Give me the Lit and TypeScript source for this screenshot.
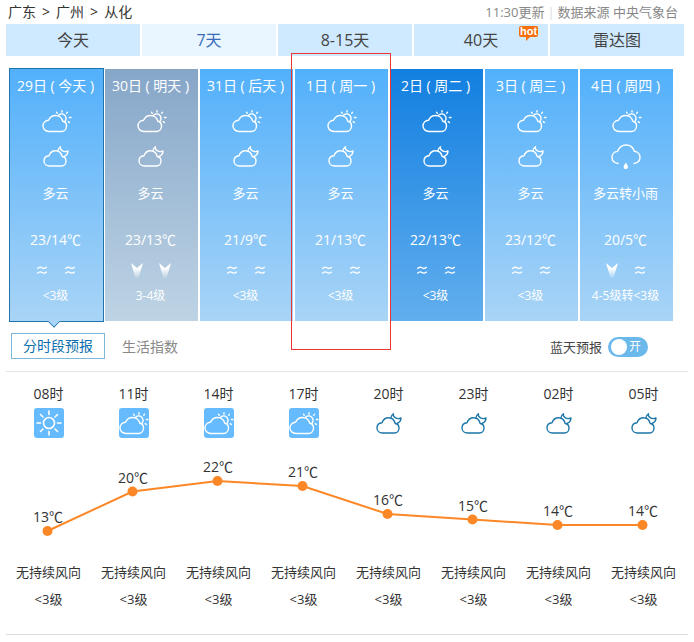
import { LitElement, html, svg, css } from "lit";
import { customElement } from "lit/decorators.js";

const days = [
  { date: "29日 ( 今天 )", weather: "多云", temp: "23/14℃", wind: ["w", "w"], level: "<3级", cls: "today", night: "moon" },
  { date: "30日 ( 明天 )", weather: "多云", temp: "23/13℃", wind: ["a", "a"], level: "3-4级", cls: "grey", night: "moon" },
  { date: "31日 ( 后天 )", weather: "多云", temp: "21/9℃", wind: ["w", "w"], level: "<3级", cls: "", night: "moon" },
  { date: "1日 ( 周一 )", weather: "多云", temp: "21/13℃", wind: ["w", "w"], level: "<3级", cls: "", night: "moon" },
  { date: "2日 ( 周二 )", weather: "多云", temp: "22/13℃", wind: ["w", "w"], level: "<3级", cls: "deep", night: "moon" },
  { date: "3日 ( 周三 )", weather: "多云", temp: "23/12℃", wind: ["w", "w"], level: "<3级", cls: "", night: "moon" },
  { date: "4日 ( 周四 )", weather: "多云转小雨", temp: "20/5℃", wind: ["a", "w"], level: "4-5级转<3级", cls: "", night: "rain" },
];

const hours = [
  { t: "08时", icon: "sun", temp: 13, y: 75 },
  { t: "11时", icon: "cloud", temp: 20, y: 35.5 },
  { t: "14时", icon: "cloud", temp: 22, y: 25 },
  { t: "17时", icon: "cloud", temp: 21, y: 30 },
  { t: "20时", icon: "moon", temp: 16, y: 58 },
  { t: "23时", icon: "moon", temp: 15, y: 63.5 },
  { t: "02时", icon: "moon", temp: 14, y: 69 },
  { t: "05时", icon: "moon", temp: 14, y: 69 },
];

const cloudSun = html`<svg width="30" height="23" viewBox="0 0 30 23" fill="none" stroke="currentColor" stroke-width="1.4" stroke-linecap="round">
  <path d="M7 21.5C3.5 21.5 1 19 1 16C1 12.8 3.5 10.5 6.5 10.3C8 7 11 5.5 13.5 5.5C17 5.5 20 8 20.8 11.2C23 11.5 24.5 13.5 24.5 16C24.5 19 22.5 21.5 19.5 21.5Z"/>
  <path d="M16.3 5.5A4 4 0 1 1 23 11.2"/>
  <path d="M20 .8V2M14.5 2.2L15.3 3.3M25.5 2.2L24.7 3.3M29 7.500H27.4M27.5 12.500L26.2 11.6"/>
</svg>`;

const cloudMoon = html`<svg width="26" height="21" viewBox="0 0 26 21" fill="none" stroke="currentColor" stroke-width="1.4" stroke-linecap="round" stroke-linejoin="round">
  <path d="M6.500 20C3.300 20 1 17.800 1 15C1 12 3.200 10 6 9.800C7.300 6.300 10 4.800 12.500 4.800C15.800 4.800 18.300 7 19.200 10.500C21.500 10.800 23 12.600 23 15C23 17.800 21.200 20 18.500 20Z"/>
  <path d="M14.800 5.200C14.900 3.500 15.800 1.800 17.500 .8C16.500 3.500 20.500 7 25 5C25 7.500 23.500 9.500 21 10.500"/>
</svg>`;

const cloudRain = html`<svg width="30" height="25" viewBox="0 0 30 25" fill="none" stroke="currentColor" stroke-width="1.4" stroke-linecap="round">
  <path d="M7 19.500C3.500 19 1 16.500 1 13.300C1 10 3.400 7.600 6.600 7.300C8 3.600 11.200 1 15 1C19 1 22.300 3.600 23.300 7.300C26.600 7.600 29 10 29 13.300C29 16.500 26.500 19 23 19.500"/>
  <path d="M14.800 19.800C13.800 21.200 13.300 22 13.300 22.800C13.300 23.800 13.900 24.400 14.800 24.400C15.700 24.400 16.300 23.800 16.300 22.800C16.300 22 15.800 21.200 14.800 19.800Z" fill="currentColor"/>
</svg>`;

const sunBox = html`<svg width="30" height="30" viewBox="0 0 30 30" fill="none" stroke="#fff" stroke-width="1.6" stroke-linecap="round">
  <circle cx="15" cy="15" r="5.500"/>
  <path d="M15 3V6.500M15 23.500V27M3 15H6.500M23.500 15H27M6.500 6.500L9 9M21 21L23.500 23.500M23.500 6.500L21 9M9 21L6.500 23.500"/>
</svg>`;

function windIcon(kind: string) {
  if (kind === "a") {
    return html`<svg class="dart" width="12" height="15" viewBox="0 0 12 15">
      <path d="M0 0L6 5L12 0L7.500 15H4.500Z" fill="url(#fade)"/>
    </svg>`;
  }
  return html`<svg width="10" height="9" viewBox="0 0 10 9" fill="none" stroke="#fff" stroke-width="1.400">
    <path d="M.3 2.800C2.200 .8 3.600 .8 5 1.800C6.400 2.800 7.800 2.800 9.700 1"/>
    <path d="M.3 7.500C2.200 5.500 3.600 5.500 5 6.500C6.400 7.500 7.800 7.500 9.700 5.700"/>
  </svg>`;
}

@customElement("app-root")
export class AppRoot extends LitElement {
  static styles = css`
    :host {
      display: block;
      position: relative;
      width: 694px;
      height: 642px;
      overflow: hidden;
      background: #fff;
      font-family: "Open Sans", "Noto Sans CJK SC", sans-serif;
      color: #333;
    }
    .top {
      display: flex;
      justify-content: space-between;
      align-items: center;
      box-sizing: border-box;
      height: 24px;
      padding: 0 16px 2px 8px;
    }
    .crumb { font-size: 14px; word-spacing: 2.4px; color: #333; }
    .update { font-size: 13px; color: #888; }
    .update i { color: #ddd; font-style: normal; margin: 0 3px; }
    .tabs {
      display: flex;
      gap: 2px;
      margin-left: 6px;
    }
    .tab {
      position: relative;
      width: 134px;
      height: 32px;
      line-height: 32px;
      text-align: center;
      font-size: 16px;
      color: #444;
      background: #cfe9ff;
    }
    .tab.on { background: #e9f5ff; color: #3a6cb8; }
    .hot {
      position: absolute;
      left: 105px;
      top: 2px;
      width: 19px;
      height: 11px;
      line-height: 11px;
      font-size: 11px;
      font-weight: 700;
      font-family: "Liberation Sans", sans-serif;
      color: #fff;
      background: #f66f0c;
      border-radius: 2px;
    }
    .hot::after {
      content: "";
      position: absolute;
      left: 7px;
      top: 11px;
      border: 2px solid transparent;
      border-top-color: #f66f0c;
      border-left-color: #f66f0c;
    }
    .cards {
      display: flex;
      gap: 2px;
      margin: 13px 0 0 10px;
    }
    .card {
      position: relative;
      display: flex;
      flex-direction: column;
      align-items: center;
      box-sizing: border-box;
      width: 93px;
      height: 252px;
      padding-right: 2px;
      color: #fff;
      background: linear-gradient(#52b0fb, #a9d4f6);
    }
    .card.today { box-shadow: 0 0 0 1px #1f74ad; }
    .card.today::after {
      content: "";
      position: absolute;
      left: 39px;
      bottom: -5px;
      width: 9px;
      height: 9px;
      transform: rotate(45deg);
      background: #a9d4f6;
      border-right: 1px solid #1f74ad;
      border-bottom: 1px solid #1f74ad;
      clip-path: polygon(100% 0, 100% 100%, 0 100%);
    }
    .card.grey { background: linear-gradient(#86a6c8, #bed4e5); }
    .card.deep { background: linear-gradient(#127fe0, #62aeee); }
    .date { height: 34px; line-height: 34px; font-size: 14px; white-space: nowrap; }
    .i1 { height: 22px; margin: 7px 0 0 2px; }
    .i2 { display: flex; justify-content: center; align-items: center; height: 24px; margin: 12px 0 0 1px; }
    .weather { height: 24px; line-height: 24px; margin-top: 13px; font-size: 13px; white-space: nowrap; }
    .temp { height: 24px; line-height: 24px; margin-top: 23px; font-size: 14px; }
    .wind { display: flex; justify-content: center; align-items: center; gap: 18px; height: 16px; margin-top: 10px; }
    .dart { margin: 0 -1px; }
    .level { height: 20px; line-height: 20px; margin-top: 8px; font-size: 12px; white-space: nowrap; }
    .sub {
      display: flex;
      align-items: center;
      box-sizing: border-box;
      height: 38px;
      margin: 12px 46px 0 11px;
      padding-bottom: 12px;
      font-size: 14px;
    }
    .sub-on {
      width: 92px;
      height: 24px;
      line-height: 24px;
      text-align: center;
      color: #0b6fae;
      border: 1px solid #7db8da;
    }
    .sub-off { margin-left: 17px; color: #888; }
    .sky { margin-left: auto; font-size: 13px; color: #444; display: flex; align-items: center; gap: 6px; margin-top: 1px; }
    .switch {
      position: relative;
      width: 40px;
      height: 20px;
      line-height: 20px;
      padding-left: 21px;
      box-sizing: border-box;
      border-radius: 10px;
      color: #fff;
      font-size: 12px;
      background: #6bb8ea;
    }
    .switch::before {
      content: "";
      position: absolute;
      left: 3px;
      top: 2px;
      width: 16px;
      height: 16px;
      border-radius: 50%;
      background: #fff;
    }
    .line { height: 1px; margin: 0 6px; background: #e6e6e6; }
    .hours {
      display: grid;
      grid-template-columns: repeat(8, 85px);
      margin: 10px 0 0 6px;
      justify-items: center;
    }
    .hours.lower { margin-top: 0; }
    .hour { font-size: 14px; height: 24px; line-height: 24px; color: #333; }
    .icon {
      display: flex;
      justify-content: center;
      align-items: center;
      width: 30px;
      height: 30px;
      margin-top: 2px;
      border-radius: 3px;
      color: #fff;
    }
    .icon.day { background: #66bbff; }
    .icon.night { color: #1d76a8; }
    .chart { display: block; margin-top: 18px; }
    .chart text { font-size: 14px; fill: #333; text-anchor: middle; }
    .speak { font-size: 13px; height: 26px; line-height: 26px; white-space: nowrap; color: #333; margin-top: 3px; }
    .power { font-size: 13px; height: 26px; line-height: 26px; color: #333; margin-top: 1px; }
    .foot { height: 1px; margin: 22px 6px 0; background: #ddd; }
    .mark {
      position: absolute;
      left: 291px;
      top: 53px;
      width: 98px;
      height: 295px;
      border: 1px solid #e33;
    }
    .defs { position: absolute; width: 0; height: 0; }
  `;

  render() {
    const pts = hours.map((h, i) => `${47.5 + 85 * i},${h.y}`).join(" ");
    return html`
      <svg class="defs">
        <defs>
          <linearGradient id="fade" x1="0" y1="0" x2="0" y2="1">
            <stop offset="0.35" stop-color="#fff"></stop>
            <stop offset="1" stop-color="#fff" stop-opacity="0.1"></stop>
          </linearGradient>
        </defs>
      </svg>
      <div class="top">
        <div class="crumb">广东 &gt; 广州 &gt; 从化</div>
        <div class="update">11:30更新<i>|</i>数据来源 中央气象台</div>
      </div>
      <div class="tabs">
        <div class="tab">今天</div>
        <div class="tab on">7天</div>
        <div class="tab">8-15天</div>
        <div class="tab">40天<span class="hot">hot</span></div>
        <div class="tab">雷达图</div>
      </div>
      <div class="cards">
        ${days.map((d) => html`
          <div class="card ${d.cls}">
            <div class="date">${d.date}</div>
            <div class="i1">${cloudSun}</div>
            <div class="i2">${d.night === "rain" ? cloudRain : cloudMoon}</div>
            <div class="weather">${d.weather}</div>
            <div class="temp">${d.temp}</div>
            <div class="wind">${d.wind.map((w) => windIcon(w))}</div>
            <div class="level">${d.level}</div>
          </div>
        `)}
      </div>
      <div class="sub">
        <div class="sub-on">分时段预报</div>
        <div class="sub-off">生活指数</div>
        <div class="sky">蓝天预报<span class="switch">开</span></div>
      </div>
      <div class="line"></div>
      <div class="hours">
        ${hours.map((h) => html`<div class="hour">${h.t}</div>`)}
        ${hours.map((h) => html`
          <div class="icon ${h.icon === "moon" ? "night" : "day"}">
            ${h.icon === "sun" ? sunBox : h.icon === "cloud" ? cloudSun : cloudMoon}
          </div>
        `)}
      </div>
      <svg class="chart" width="694" height="100">
        <polyline points=${pts} fill="none" stroke="#fc8727" stroke-width="2"></polyline>
        ${hours.map((h, i) => svg`
          <circle cx=${47.5 + 85 * i} cy=${h.y} r="5" fill="#fc8727"></circle>
          <text x=${48 + 85 * i} y=${h.y - 9}>${h.temp}℃</text>
        `)}
      </svg>
      <div class="hours lower">
        ${hours.map(() => html`<div class="speak">无持续风向</div>`)}
        ${hours.map(() => html`<div class="power">&lt;3级</div>`)}
      </div>
      <div class="foot"></div>
      <div class="mark"></div>
    `;
  }
}
